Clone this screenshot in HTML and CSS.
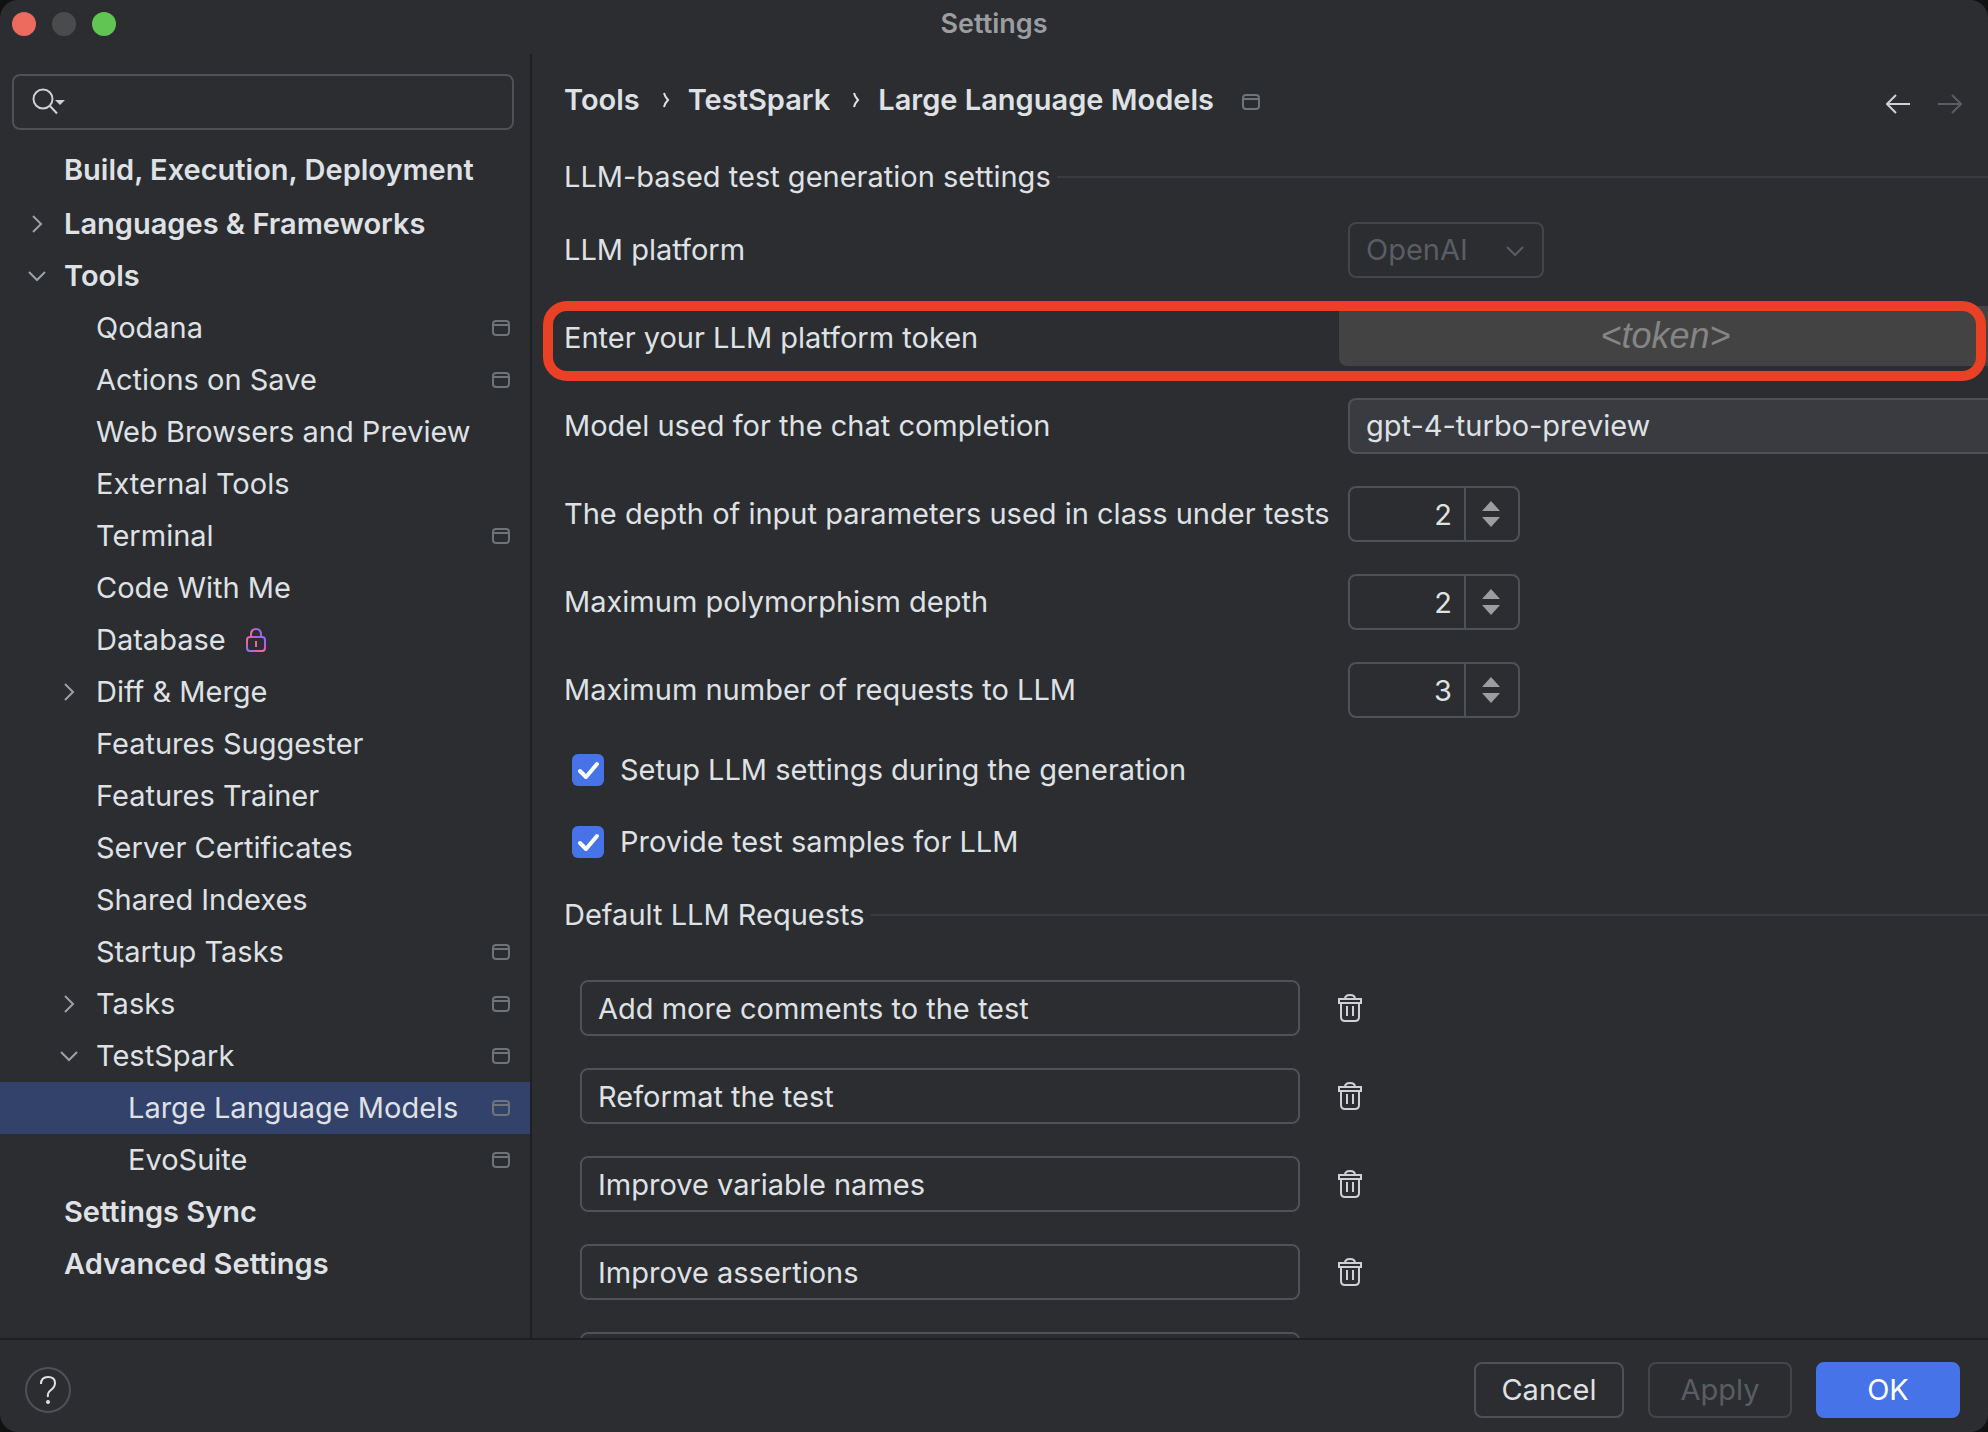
FILE: index.html
```html
<!DOCTYPE html>
<html lang="en">
<head>
<meta charset="utf-8">
<title>Settings</title>
<link rel="stylesheet" href="styles.css">
</head>
<body>
<svg class="defs" aria-hidden="true">
  <defs>
    <linearGradient id="lock-stroke" x1="0" y1="1" x2="1" y2="0">
      <stop offset="0" stop-color="#5b8cff"/>
      <stop offset="0.2" stop-color="#e055c8"/>
      <stop offset="0.45" stop-color="#f0708c"/>
      <stop offset="0.65" stop-color="#d050e0"/>
      <stop offset="1" stop-color="#7a70ff"/>
    </linearGradient>
    <symbol id="project" viewBox="0 0 18 16"><rect x="1" y="1" width="16" height="14" rx="3"/><path d="M1 5h16"/></symbol>
    <symbol id="right" viewBox="0 0 18 18"><path d="M5 1l8 8-8 8"/></symbol>
    <symbol id="down" viewBox="0 0 18 18"><path d="M1 5l8 8 8-8"/></symbol>
    <symbol id="crumb" viewBox="0 0 8 16"><path d="M2 1q1 4 4 7q-3 3-4 7"/></symbol>
    <symbol id="trash" viewBox="0 0 24 28"><path d="M7 5q0-4 5-4t5 4M1 5h22v4H1zM3 9v14q0 4 4 4h10q4 0 4-4V9M9 12v10M15 12v10"/></symbol>
  </defs>
</svg>
<div class="window">
  <header class="titlebar">
    <div class="lights">
      <button class="light close" aria-label="Close"></button>
      <button class="light minimize" aria-label="Minimize" disabled></button>
      <button class="light zoom" aria-label="Zoom"></button>
    </div>
    <h1 class="title">Settings</h1>
  </header>
  <div class="main">
    <aside class="sidebar">
      <div class="search">
        <svg class="search-icon" viewBox="0 0 34 28" aria-hidden="true"><circle cx="11" cy="11" r="9.5"/><path d="M18 18l7 7.500"/><path class="solid" d="M23 12h10l-5 5z"/></svg>
        <input class="search-input" type="search" aria-label="Search settings">
      </div>
      <nav class="tree" aria-label="Settings">
        <a href="#" class="node top first"><span class="twisty"></span>Build, Execution, Deployment</a>
        <a href="#" class="node top"><svg class="twisty"><use href="#right"/></svg>Languages &amp; Frameworks</a>
        <a href="#" class="node top"><svg class="twisty"><use href="#down"/></svg>Tools</a>
        <a href="#" class="node sub"><span class="twisty"></span>Qodana<svg class="project"><use href="#project"/></svg></a>
        <a href="#" class="node sub"><span class="twisty"></span>Actions on Save<svg class="project"><use href="#project"/></svg></a>
        <a href="#" class="node sub"><span class="twisty"></span>Web Browsers and Preview</a>
        <a href="#" class="node sub"><span class="twisty"></span>External Tools</a>
        <a href="#" class="node sub"><span class="twisty"></span>Terminal<svg class="project"><use href="#project"/></svg></a>
        <a href="#" class="node sub"><span class="twisty"></span>Code With Me</a>
        <a href="#" class="node sub"><span class="twisty"></span>Database<svg class="lock" viewBox="0 0 20 24"><rect x="1" y="9" width="18" height="14" rx="3"/><path d="M5 9V6.500q0-5.500 5-5.500t5 5.500V9M10 13v6"/></svg></a>
        <a href="#" class="node sub"><svg class="twisty"><use href="#right"/></svg>Diff &amp; Merge</a>
        <a href="#" class="node sub"><span class="twisty"></span>Features Suggester</a>
        <a href="#" class="node sub"><span class="twisty"></span>Features Trainer</a>
        <a href="#" class="node sub"><span class="twisty"></span>Server Certificates</a>
        <a href="#" class="node sub"><span class="twisty"></span>Shared Indexes</a>
        <a href="#" class="node sub"><span class="twisty"></span>Startup Tasks<svg class="project"><use href="#project"/></svg></a>
        <a href="#" class="node sub"><svg class="twisty"><use href="#right"/></svg>Tasks<svg class="project"><use href="#project"/></svg></a>
        <a href="#" class="node sub"><svg class="twisty"><use href="#down"/></svg>TestSpark<svg class="project"><use href="#project"/></svg></a>
        <a href="#" class="node leaf selected" aria-current="page"><span class="twisty"></span>Large Language Models<svg class="project"><use href="#project"/></svg></a>
        <a href="#" class="node leaf"><span class="twisty"></span>EvoSuite<svg class="project"><use href="#project"/></svg></a>
        <a href="#" class="node top"><span class="twisty"></span>Settings Sync</a>
        <a href="#" class="node top"><span class="twisty"></span>Advanced Settings</a>
      </nav>
    </aside>
    <main class="page">
      <div class="page-head">
        <nav class="crumbs" aria-label="Breadcrumb">
          <a href="#">Tools</a>
          <svg class="crumb"><use href="#crumb"/></svg>
          <a href="#">TestSpark</a>
          <svg class="crumb"><use href="#crumb"/></svg>
          <a href="#">Large Language Models</a>
          <svg class="project"><use href="#project"/></svg>
        </nav>
        <div class="history">
          <button class="arrow" aria-label="Back"><svg viewBox="0 0 24 20"><path d="M24 10H2M10 1l-9 9 9 9"/></svg></button>
          <button class="arrow" aria-label="Forward" disabled><svg viewBox="0 0 24 20"><path d="M0 10h22M14 1l9 9-9 9"/></svg></button>
        </div>
      </div>
      <h2 class="section">LLM-based test generation settings</h2>
      <form class="form">
        <div class="row">
          <label for="platform">LLM platform</label>
          <div class="combo combo-small">
            <select id="platform" disabled><option>OpenAI</option></select>
            <svg class="combo-arrow" viewBox="0 0 18 12"><path d="M1 1l8 8 8-8"/></svg>
          </div>
        </div>
        <div class="row token-row">
          <label for="token">Enter your LLM platform token</label>
          <input class="token" id="token" type="text" placeholder="&lt;token&gt;">
        </div>
        <div class="row">
          <label for="model">Model used for the chat completion</label>
          <div class="combo combo-wide"><select id="model"><option>gpt-4-turbo-preview</option></select></div>
        </div>
        <div class="row">
          <label for="depth">The depth of input parameters used in class under tests</label>
          <div class="spinner"><input id="depth" type="text" inputmode="numeric" value="2"><svg class="steps" viewBox="0 0 18 26"><path d="M0 10l9-10 9 10zM0 16h18l-9 10z"/></svg></div>
        </div>
        <div class="row">
          <label for="poly">Maximum polymorphism depth</label>
          <div class="spinner"><input id="poly" type="text" inputmode="numeric" value="2"><svg class="steps" viewBox="0 0 18 26"><path d="M0 10l9-10 9 10zM0 16h18l-9 10z"/></svg></div>
        </div>
        <div class="row">
          <label for="requests">Maximum number of requests to LLM</label>
          <div class="spinner"><input id="requests" type="text" inputmode="numeric" value="3"><svg class="steps" viewBox="0 0 18 26"><path d="M0 10l9-10 9 10zM0 16h18l-9 10z"/></svg></div>
        </div>
      </form>
      <div class="checks">
        <label class="check"><span class="tick"><input type="checkbox" checked><svg viewBox="0 0 32 32"><path d="M8 17l6 6L25 10"/></svg></span>Setup LLM settings during the generation</label>
        <label class="check"><span class="tick"><input type="checkbox" checked><svg viewBox="0 0 32 32"><path d="M8 17l6 6L25 10"/></svg></span>Provide test samples for LLM</label>
      </div>
      <h2 class="section">Default LLM Requests</h2>
      <div class="requests">
        <div class="request"><input type="text" aria-label="Request 1" value="Add more comments to the test"><button class="delete" aria-label="Delete request 1"><svg><use href="#trash"/></svg></button></div>
        <div class="request"><input type="text" aria-label="Request 2" value="Reformat the test"><button class="delete" aria-label="Delete request 2"><svg><use href="#trash"/></svg></button></div>
        <div class="request"><input type="text" aria-label="Request 3" value="Improve variable names"><button class="delete" aria-label="Delete request 3"><svg><use href="#trash"/></svg></button></div>
        <div class="request"><input type="text" aria-label="Request 4" value="Improve assertions"><button class="delete" aria-label="Delete request 4"><svg><use href="#trash"/></svg></button></div>
        <div class="request"><input type="text" aria-label="Request 5"></div>
      </div>
    </main>
  </div>
  <footer class="footer">
    <button class="help" aria-label="Help"><svg viewBox="0 0 18 30"><path d="M2 9q0-7 7-7t7 6q0 4-4 7t-3 7"/><circle cx="9" cy="27" r="2"/></svg></button>
    <div class="actions">
      <button class="btn cancel">Cancel</button>
      <button class="btn" disabled>Apply</button>
      <button class="btn ok">OK</button>
    </div>
  </footer>
</div>
</body>
</html>
```
FILE: styles.css
```css
:root {
  --bg: #2b2d30;
  --line: #1e1f22;
  --text: #dfe1e5;
  --border: #4e5157;
  --muted: #6f737a;
  --rule: #393b40;
  --disabled: #5a5d63;
  --blue: #4674e8;
}

* { box-sizing: border-box; }

body {
  margin: 0;
  background: #111;
  color: var(--text);
  font: 29px/36px Inter, sans-serif;
}

a { color: inherit; text-decoration: none; }
button, input, select { font: inherit; color: inherit; margin: 0; }
button { padding: 0; border: 0; background: none; }
svg { display: block; flex: none; fill: none; stroke: currentColor; stroke-width: 2; }
h1, h2 { margin: 0; font-weight: 400; font-size: inherit; }
.defs { position: absolute; width: 0; height: 0; }

.window {
  display: flex;
  flex-direction: column;
  height: 100vh;
  background: var(--bg);
  border-radius: 18px;
  overflow: hidden;
}

.titlebar {
  display: grid;
  grid-template-columns: 1fr auto 1fr;
  align-items: center;
  flex: none;
  height: 54px;
  padding: 0 12px 6px;
}
.lights { display: flex; gap: 16px; }
.light { width: 24px; height: 24px; border-radius: 50%; }
.close { background: #ed6a5e; }
.minimize { background: #4a4b4d; }
.zoom { background: #61c554; }
.title { font-size: 27px; font-weight: 600; color: #9c9da0; }

.main { display: flex; flex: 1; min-height: 0; }

.sidebar {
  flex: none;
  width: 532px;
  border-right: 2px solid var(--line);
  padding-top: 20px;
  overflow: hidden;
}
.search {
  display: flex;
  align-items: center;
  gap: 8px;
  height: 56px;
  margin: 0 16px 14px 12px;
  padding: 0 18px;
  border: 2px solid var(--border);
  border-radius: 8px;
}
.search-icon { width: 34px; height: 28px; color: #ced0d6; }
.solid { fill: currentColor; stroke: none; }
.search-input { flex: 1; min-width: 0; border: 0; background: none; outline: 0; }

.node {
  display: flex;
  align-items: center;
  height: 52px;
  padding-right: 20px;
  white-space: nowrap;
}
.first { margin-bottom: 2px; }
.top { padding-left: 28px; font-weight: 600; }
.sub { padding-left: 60px; }
.leaf { padding-left: 92px; }
.selected { background: #33426b; }
.twisty { width: 18px; height: 18px; margin-right: 18px; color: #9da0a8; }
.project { width: 18px; height: 16px; color: var(--muted); }
.node .project { margin-left: auto; }
.lock { width: 20px; height: 24px; margin-left: 20px; stroke: url(#lock-stroke); }

.page { flex: 1; min-width: 0; padding-left: 32px; overflow: hidden; }

.page-head {
  display: flex;
  justify-content: space-between;
  align-items: center;
  height: 92px;
  padding-right: 26px;
}
.crumbs { display: flex; align-items: center; font-weight: 600; }
.crumb { width: 8px; height: 16px; margin: 0 18px 0 22px; }
.crumbs .project { margin: 4px 0 0 28px; }
.history { display: flex; gap: 28px; padding-top: 8px; }
.arrow { color: #ced0d6; }
.arrow svg { width: 24px; height: 20px; }
.arrow:disabled { color: var(--disabled); }

.section { display: flex; align-items: center; gap: 6px; height: 62px; }
.section::after { content: ""; flex: 1; height: 2px; background: var(--rule); }

.form { display: flex; flex-direction: column; gap: 32px; padding-top: 14px; }
.row {
  display: grid;
  grid-template-columns: 784px 1fr;
  align-items: center;
  height: 56px;
}
.combo {
  position: relative;
  height: 56px;
  border: 2px solid var(--border);
  border-radius: 8px;
}
.combo select {
  width: 100%;
  height: 100%;
  padding: 0 16px;
  border: 0;
  background: none;
  appearance: none;
  opacity: 1;
}
.combo-small { width: 196px; border-color: #43454a; color: var(--disabled); }
.combo-arrow { position: absolute; right: 18px; top: 22px; width: 18px; height: 12px; }
.combo-wide { border-right: 0; border-radius: 8px 0 0 8px; background: var(--rule); }

/* Outlined row: the ring lies over both the label and the field */
.token-row { position: relative; }
.token-row::after {
  content: "";
  position: absolute;
  inset: -9px 2px -15px -21px;
  border: 10px solid #ea4025;
  border-radius: 24px;
  pointer-events: none;
}
.token {
  height: 60px;
  margin: -4px 0 0 -9px;
  padding: 2px 0 0 4px;
  border: 0;
  border-radius: 0 0 0 8px;
  background: #434343;
  text-align: center;
  min-width: 0;
}
.token::placeholder { color: #858585; font: italic 36px/40px "Liberation Sans", sans-serif; }

.spinner {
  display: flex;
  align-items: center;
  width: 172px;
  height: 56px;
  border: 2px solid var(--border);
  border-radius: 8px;
}
.spinner input {
  width: 116px;
  height: 52px;
  padding: 0 12px;
  border: 0;
  border-right: 2px solid var(--border);
  background: none;
  text-align: right;
}
.steps { width: 18px; height: 26px; margin-left: 16px; fill: #9c9da0; stroke: none; }

.checks { display: flex; flex-direction: column; gap: 36px; padding: 34px 8px 24px; }
.check { display: flex; align-items: center; gap: 16px; }
.tick { position: relative; width: 32px; height: 32px; }
.tick input {
  display: block;
  width: 32px;
  height: 32px;
  appearance: none;
  border-radius: 6px;
  background: var(--blue);
}
.tick svg { position: absolute; inset: 0; stroke: #fff; stroke-width: 4; stroke-linecap: round; stroke-linejoin: round; pointer-events: none; }

.requests { display: flex; flex-direction: column; gap: 32px; padding: 34px 16px 0; }
.request { display: flex; align-items: center; gap: 38px; }
.request input {
  width: 720px;
  height: 56px;
  padding: 0 16px;
  border: 2px solid var(--border);
  border-radius: 8px;
  background: none;
}
.delete svg { width: 24px; height: 28px; color: #ced0d6; }

.footer {
  display: flex;
  justify-content: space-between;
  align-items: center;
  flex: none;
  height: 94px;
  padding: 14px 28px 6px 25px;
  border-top: 2px solid var(--line);
}
.help {
  display: grid;
  place-items: center;
  width: 46px;
  height: 46px;
  border: 2px solid var(--border);
  border-radius: 50%;
}
.help svg { width: 18px; height: 30px; }
.help circle { fill: currentColor; stroke: none; }
.actions { display: flex; gap: 24px; }
.btn {
  width: 144px;
  height: 56px;
  border: 2px solid #43454a;
  border-radius: 8px;
}
.btn:disabled { color: var(--disabled); }
.cancel { width: 150px; border-color: var(--border); }
.ok { border-color: var(--blue); background: var(--blue); color: #fff; }
```
